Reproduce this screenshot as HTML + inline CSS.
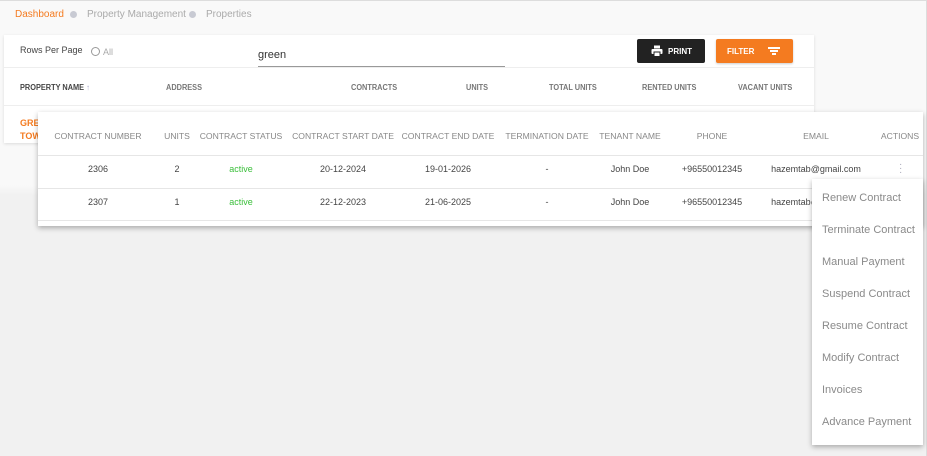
<!DOCTYPE html>
<html><head><style>
*{margin:0;padding:0;box-sizing:border-box}
body{width:927px;height:456px;overflow:hidden;font-family:"Liberation Sans",sans-serif;background:linear-gradient(#f9f9f9 0,#f9f9f9 185px,#f1f1f1 195px,#f1f1f1 100%);position:relative;border-top:1px solid #ddd;border-right:1px solid #ddd}
.a{position:absolute;white-space:nowrap}
.bc{top:8px;font-size:10px;color:#aaa}
.dot{width:7px;height:7px;border-radius:50%;background:#c8cad3;top:10px}
.card1{left:4px;top:34px;width:810px;height:108px;background:#fff;box-shadow:0 1px 3px rgba(0,0,0,.12)}
.h1{font-size:8px;font-weight:bold;color:#777;top:48px;transform:scaleX(.92);transform-origin:left}
.card2{left:38px;top:111px;width:885px;height:114px;background:#fff;box-shadow:0 2px 5px rgba(0,0,0,.3)}
.h2{font-size:8.6px;color:#888;top:19px;transform:translateX(-50%)}
.c{font-size:9px;color:#444;transform:translateX(-50%)}
.menu{left:812px;top:178px;width:111px;height:266px;background:#fff;box-shadow:0 2px 5px rgba(0,0,0,.3)}
.mi{left:10px;font-size:11px;color:#8a8a8a}
</style></head><body>
<div class="a bc" style="left:15px;color:#f47b20">Dashboard</div>
<div class="a dot" style="left:70px"></div>
<div class="a bc" style="left:87px">Property Management</div>
<div class="a dot" style="left:189px"></div>
<div class="a bc" style="left:206px">Properties</div>

<div class="a card1">
 <div class="a" style="left:16px;top:10px;font-size:9px;color:#444">Rows Per Page</div>
 <div class="a" style="left:87px;top:12px;width:9px;height:9px;border:1px solid #999;border-radius:50%"></div>
 <div class="a" style="left:99px;top:12px;font-size:9px;color:#aaa">All</div>
 <div class="a" style="left:254px;top:14px;font-size:11px;color:#333">green</div>
 <div class="a" style="left:254px;top:31px;width:247px;height:1px;background:#999"></div>
 <div class="a" style="left:633px;top:4px;width:68px;height:24px;background:#222;border-radius:2px;color:#fff;font-size:8px;font-weight:bold">
  <svg class="a" style="left:14px;top:6px" width="12" height="12" viewBox="0 0 12 12"><rect x="3" y="0.5" width="6" height="3" fill="#fff"/><rect x="0.5" y="4" width="11" height="5" rx="1" fill="#fff"/><rect x="3" y="7" width="6" height="4.5" fill="#fff" stroke="#222" stroke-width="1"/></svg>
  <span class="a" style="left:31px;top:8px">PRINT</span></div>
 <div class="a" style="left:712px;top:4px;width:77px;height:24px;background:#f47b20;border-radius:2px;color:#fff;font-size:8px;font-weight:bold;box-shadow:0 1px 2px rgba(0,0,0,.2)">
  <span class="a" style="left:11px;top:8px">FILTER</span>
  <div class="a" style="left:52px;top:8px;width:12px;height:1.5px;background:#fff"></div>
  <div class="a" style="left:54px;top:11px;width:8px;height:1.5px;background:#fff"></div>
  <div class="a" style="left:56px;top:14px;width:4px;height:1.5px;background:#fff"></div></div>
 <div class="a" style="left:0;top:32px;width:810px;height:1px;background:#eee"></div>
 <div class="a h1" style="left:16px;color:#444">PROPERTY NAME <span style="color:#aac">↑</span></div>
 <div class="a h1" style="left:162px">ADDRESS</div>
 <div class="a h1" style="left:347px">CONTRACTS</div>
 <div class="a h1" style="left:462px">UNITS</div>
 <div class="a h1" style="left:545px">TOTAL UNITS</div>
 <div class="a h1" style="left:638px">RENTED UNITS</div>
 <div class="a h1" style="left:734px">VACANT UNITS</div>
 <div class="a" style="left:0;top:70px;width:810px;height:1px;background:#eee"></div>
 <div class="a" style="left:16px;top:82px;font-size:9px;font-weight:bold;color:#f47b20;line-height:13px">GREEN<br>TOWER</div>
</div>

<div class="a card2">
 <div class="a h2" style="left:60px">CONTRACT NUMBER</div>
 <div class="a h2" style="left:139px">UNITS</div>
 <div class="a h2" style="left:203px">CONTRACT STATUS</div>
 <div class="a h2" style="left:305px">CONTRACT START DATE</div>
 <div class="a h2" style="left:410px">CONTRACT END DATE</div>
 <div class="a h2" style="left:509px">TERMINATION DATE</div>
 <div class="a h2" style="left:592px">TENANT NAME</div>
 <div class="a h2" style="left:674px">PHONE</div>
 <div class="a h2" style="left:778px">EMAIL</div>
 <div class="a h2" style="left:862px">ACTIONS</div>
 <div class="a" style="left:0;top:43px;width:885px;height:1px;background:#e6e6e6"></div>
 <div class="a" style="left:0;top:76px;width:885px;height:1px;background:#e6e6e6"></div>
 <div class="a" style="left:0;top:108px;width:885px;height:1px;background:#e6e6e6"></div>
 <div class="a c" style="left:60px;top:52px">2306</div>
 <div class="a c" style="left:139px;top:52px">2</div>
 <div class="a c" style="left:203px;top:52px;color:#3bbf3b">active</div>
 <div class="a c" style="left:305px;top:52px">20-12-2024</div>
 <div class="a c" style="left:410px;top:52px">19-01-2026</div>
 <div class="a c" style="left:509px;top:52px">-</div>
 <div class="a c" style="left:592px;top:52px">John Doe</div>
 <div class="a c" style="left:674px;top:52px">+96550012345</div>
 <div class="a c" style="left:778px;top:52px">hazemtab@gmail.com</div>
 <div class="a" style="left:861px;top:51px;font-size:10px;color:#aab;line-height:4px">·<br>·<br>·</div>
 <div class="a c" style="left:60px;top:85px">2307</div>
 <div class="a c" style="left:139px;top:85px">1</div>
 <div class="a c" style="left:203px;top:85px;color:#3bbf3b">active</div>
 <div class="a c" style="left:305px;top:85px">22-12-2023</div>
 <div class="a c" style="left:410px;top:85px">21-06-2025</div>
 <div class="a c" style="left:509px;top:85px">-</div>
 <div class="a c" style="left:592px;top:85px">John Doe</div>
 <div class="a c" style="left:674px;top:85px">+96550012345</div>
 <div class="a c" style="left:778px;top:85px">hazemtab@gmail.com</div>
</div>

<div class="a menu">
 <div class="a mi" style="top:13px">Renew Contract</div>
 <div class="a mi" style="top:45px">Terminate Contract</div>
 <div class="a mi" style="top:77px">Manual Payment</div>
 <div class="a mi" style="top:109px">Suspend Contract</div>
 <div class="a mi" style="top:141px">Resume Contract</div>
 <div class="a mi" style="top:173px">Modify Contract</div>
 <div class="a mi" style="top:205px">Invoices</div>
 <div class="a mi" style="top:237px">Advance Payment</div>
</div>
</body></html>
